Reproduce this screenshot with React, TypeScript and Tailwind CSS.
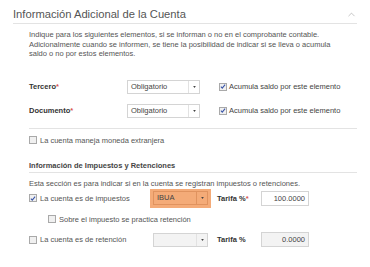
import { ChevronUp } from 'lucide-react'

const font = 'font-["Liberation_Sans",Arial,sans-serif]'

function Check({ checked = false }: { checked?: boolean }) {
  return (
    <span className="flex h-[8px] w-[8px] shrink-0 items-center justify-center border border-[#a9a9a9] bg-[#f0f0f0]">
      {checked && (
        <svg viewBox="0 0 8 8" className="h-[7px] w-[7px]">
          <path d="M1.2 4.2 L3 6.2 L6.8 1.4" fill="none" stroke="#3a55a8" strokeWidth="1.4" />
        </svg>
      )}
    </span>
  )
}

function Select({ value = '', className = '' }: { value?: string; className?: string }) {
  return (
    <div className={`flex h-[14px] items-stretch border border-[#d4d4d4] bg-white ${className}`}>
      <span className="flex-1 truncate pl-[3px] text-[7.5px] leading-[12px] text-[#444]">{value}</span>
      <span className="flex w-[11px] items-center justify-center border-l border-[#e2e2e2]">
        <svg viewBox="0 0 4 3" className="h-[2px] w-[3px]">
          <path d="M0 0 H4 L2 3 Z" fill="#444" />
        </svg>
      </span>
    </div>
  )
}

function Req({ text }: { text: string }) {
  return (
    <span className="font-bold text-[#333]">
      {text}
      <span className="text-[#d9534f]">*</span>
    </span>
  )
}

export default function App() {
  return (
    <div className={`h-[267px] w-[370px] bg-white px-[13px] pt-[6px] ${font} text-[#555]`}>
      <div className="flex items-center justify-between border-b border-[#e3e3e3] pb-[1px]">
        <h2 className="text-[11.2px] leading-[16px] text-[#555]">Información Adicional de la Cuenta</h2>
        <ChevronUp size={11} strokeWidth={1.2} className="text-[#999]" />
      </div>

      <div className="pl-[16px]">
        <p className="mt-[6px] text-[7.5px] leading-[9.5px] text-[#555]">
          Indique para los siguientes elementos, si se informan o no en el comprobante contable.
          <br />
          Adicionalmente cuando se informen, se tiene la posibilidad de indicar si se lleva o acumula
          <br />
          saldo o no por estos elementos.
        </p>

        <div className="mt-[21px] flex flex-col gap-[10px] text-[7.5px]">
          {['Tercero', 'Documento'].map((label) => (
            <div key={label} className="flex items-center">
              <span className="w-[98px]">
                <Req text={label} />
              </span>
              <Select value="Obligatorio" className="w-[73px]" />
              <span className="ml-[19px] flex items-center gap-[2px] text-[#444]">
                <Check checked />
                Acumula saldo por este elemento
              </span>
            </div>
          ))}
        </div>

        <div className="mt-[10px] border-t border-[#e3e3e3]" />

        <label className="mt-[6px] flex items-center gap-[3px] text-[7.5px] text-[#555]">
          <Check />
          La cuenta maneja moneda extranjera
        </label>

        <h3 className="mt-[15px] border-b border-[#e3e3e3] pb-[1px] text-[7.5px] font-bold leading-[10px] text-[#444]">
          Información de Impuestos y Retenciones
        </h3>

        <p className="mt-[6px] text-[7.5px] leading-[10px] text-[#555]">
          Esta sección es para indicar si en la cuenta se registran impuestos o retenciones.
        </p>

        <div className="flex items-center text-[7.5px]">
          <span className="flex w-[121px] items-center gap-[3px]">
            <Check checked />
            La cuenta es de impuestos
          </span>
          <div className="flex h-[19px] w-[61px] items-center bg-[#f4ab78] pl-[3px]">
            <div className="flex h-[14px] w-[55px] items-stretch border border-[#e0935f]">
              <span className="flex-1 pl-[3px] text-[7.5px] leading-[12px] text-[#444]">IBUA</span>
              <span className="flex w-[11px] items-center justify-center border-l border-[#e0935f]">
                <svg viewBox="0 0 4 3" className="h-[2px] w-[3px]">
                  <path d="M0 0 H4 L2 3 Z" fill="#444" />
                </svg>
              </span>
            </div>
          </div>
          <span className="ml-[6px] w-[44px]">
            <Req text="Tarifa %" />
          </span>
          <div className="flex h-[15px] w-[48px] items-center justify-end border border-[#d4d4d4] bg-white pr-[3px] text-[#444]">
            100.0000
          </div>
        </div>

        <label className="ml-[19px] mt-[6px] flex items-center gap-[3px] text-[7.5px] text-[#555]">
          <Check />
          Sobre el impuesto se practica retención
        </label>

        <div className="mt-[7px] flex items-center text-[7.5px]">
          <span className="flex w-[124px] items-center gap-[3px]">
            <Check />
            La cuenta es de retención
          </span>
          <Select className="w-[55px] !bg-[#f3f3f3]" />
          <span className="ml-[9px] w-[44px] font-bold text-[#333]">Tarifa %</span>
          <div className="flex h-[15px] w-[48px] items-center justify-end border border-[#d4d4d4] bg-[#f3f3f3] pr-[3px] text-[#444]">
            0.0000
          </div>
        </div>
      </div>
    </div>
  )
}
